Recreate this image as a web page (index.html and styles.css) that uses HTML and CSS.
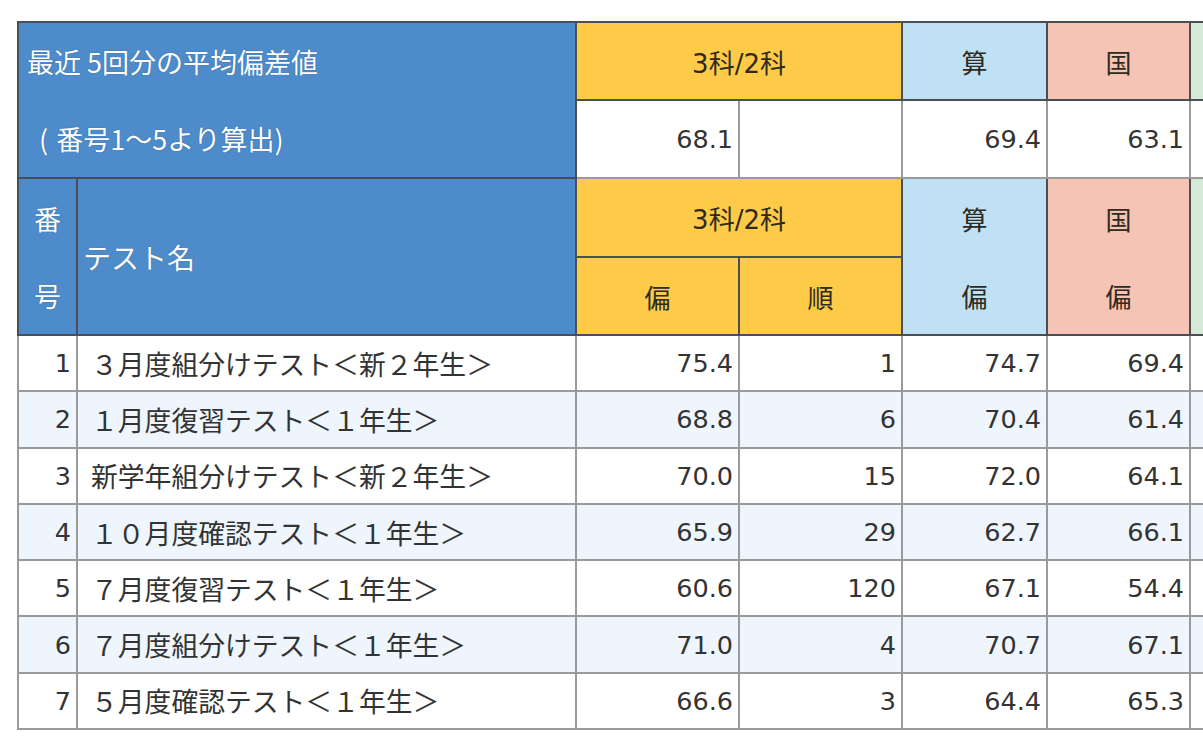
FILE: index.html
```html
<!DOCTYPE html>
<html lang="ja">
<head>
<meta charset="utf-8">
<title>偏差値一覧</title>
<link rel="stylesheet" href="styles.css">
</head>
<body>
<table class="grid">
  <colgroup>
    <col class="c-no"><col class="c-name"><col class="c-v"><col class="c-v"><col class="c-s"><col class="c-k"><col class="c-r">
  </colgroup>
  <tr class="hrow">
    <th colspan="2" class="blue left top-half">最近 5回分の平均偏差値</th>
    <th colspan="2" class="yellow">3科/2科</th>
    <th class="sky">算</th>
    <th class="pink">国</th>
    <th class="green"></th>
  </tr>
  <tr class="hrow">
    <th colspan="2" class="blue left bottom-half sub">( 番号1～5より算出)</th>
    <td class="num">68.1</td>
    <td class="num"></td>
    <td class="num">69.4</td>
    <td class="num">63.1</td>
    <td class="num"></td>
  </tr>
  <tr class="hrow r3">
    <th class="blue top-half">番</th>
    <th rowspan="2" class="blue left name-head">テスト名</th>
    <th colspan="2" class="yellow">3科/2科</th>
    <th class="sky top-half">算</th>
    <th class="pink top-half">国</th>
    <th class="green top-half"></th>
  </tr>
  <tr class="hrow">
    <th class="blue bottom-half">号</th>
    <th class="yellow">偏</th>
    <th class="yellow">順</th>
    <th class="sky bottom-half">偏</th>
    <th class="pink bottom-half">偏</th>
    <th class="green bottom-half"></th>
  </tr>
  <tr class="drow">
    <td class="num">1</td><td class="name">３月度組分けテスト＜新２年生＞</td>
    <td class="num">75.4</td><td class="num">1</td><td class="num">74.7</td><td class="num">69.4</td><td class="num"></td>
  </tr>
  <tr class="drow alt">
    <td class="num">2</td><td class="name">１月度復習テスト＜１年生＞</td>
    <td class="num">68.8</td><td class="num">6</td><td class="num">70.4</td><td class="num">61.4</td><td class="num"></td>
  </tr>
  <tr class="drow">
    <td class="num">3</td><td class="name">新学年組分けテスト＜新２年生＞</td>
    <td class="num">70.0</td><td class="num">15</td><td class="num">72.0</td><td class="num">64.1</td><td class="num"></td>
  </tr>
  <tr class="drow alt">
    <td class="num">4</td><td class="name">１０月度確認テスト＜１年生＞</td>
    <td class="num">65.9</td><td class="num">29</td><td class="num">62.7</td><td class="num">66.1</td><td class="num"></td>
  </tr>
  <tr class="drow">
    <td class="num">5</td><td class="name">７月度復習テスト＜１年生＞</td>
    <td class="num">60.6</td><td class="num">120</td><td class="num">67.1</td><td class="num">54.4</td><td class="num"></td>
  </tr>
  <tr class="drow alt">
    <td class="num">6</td><td class="name">７月度組分けテスト＜１年生＞</td>
    <td class="num">71.0</td><td class="num">4</td><td class="num">70.7</td><td class="num">67.1</td><td class="num"></td>
  </tr>
  <tr class="drow">
    <td class="num">7</td><td class="name">５月度確認テスト＜１年生＞</td>
    <td class="num">66.6</td><td class="num">3</td><td class="num">64.4</td><td class="num">65.3</td><td class="num"></td>
  </tr>
</table>
</body>
</html>
```
FILE: styles.css
```css
html, body {
  margin: 0;
  padding: 0;
  overflow: hidden;
  background: #ffffff;
}
body {
  padding: 21px 0 0 17px;
  font-family: "DejaVu Sans", "Noto Sans CJK JP", sans-serif;
  font-size: 25.5px;
  color: #333333;
}
.grid {
  border-collapse: collapse;
  table-layout: fixed;
  width: 1186px;
}
.c-no { width: 59px; }
.c-name { width: 499px; }
.c-v { width: 163px; }
.c-s { width: 145px; }
.c-k { width: 143px; }
.c-r { width: 14px; }

.grid th,
.grid td {
  border: 2px solid #9a9a9a;
  padding: 0;
  white-space: nowrap;
  overflow: hidden;
}
.grid tr > :last-child { border-right-style: hidden; }
.grid th {
  font-weight: normal;
  text-align: center;
  border-color: #4a4f55;
  font-family: "DejaVu Sans", "Noto Sans CJK JP", sans-serif;
  font-size: 26px;
  color: #2e2a22;
}
.hrow { height: 78px; }
.hrow.r3 { height: 79px; }
.drow { height: 56.3px; }
.drow.alt td { background: #eef5fc; }

.num {
  text-align: right;
  padding-right: 5px !important;
}
.name {
  text-align: left;
  padding-left: 13px !important;
  font-family: "Noto Sans CJK JP", sans-serif;
  font-size: 26.8px;
}

.blue {
  background: #4d8bca;
  color: #ffffff !important;
  text-shadow: 0 0 1px rgba(20, 40, 70, 0.5);
  font-family: "Noto Sans CJK JP", sans-serif !important;
  font-size: 27px !important;
}
.left { text-align: left !important; padding-left: 8px !important; }
.sub { padding-left: 20px !important; word-spacing: 2px; }
.name-head { padding-left: 5px !important; font-size: 28px !important; }
.yellow { background: #fdcb47; }
.sky { background: #bfe1f3; }
.pink { background: #f6c4b4; }
.green { background: #d4ead7; }

.top-half { border-bottom-style: hidden !important; }
.bottom-half { border-top-style: hidden !important; }
```
